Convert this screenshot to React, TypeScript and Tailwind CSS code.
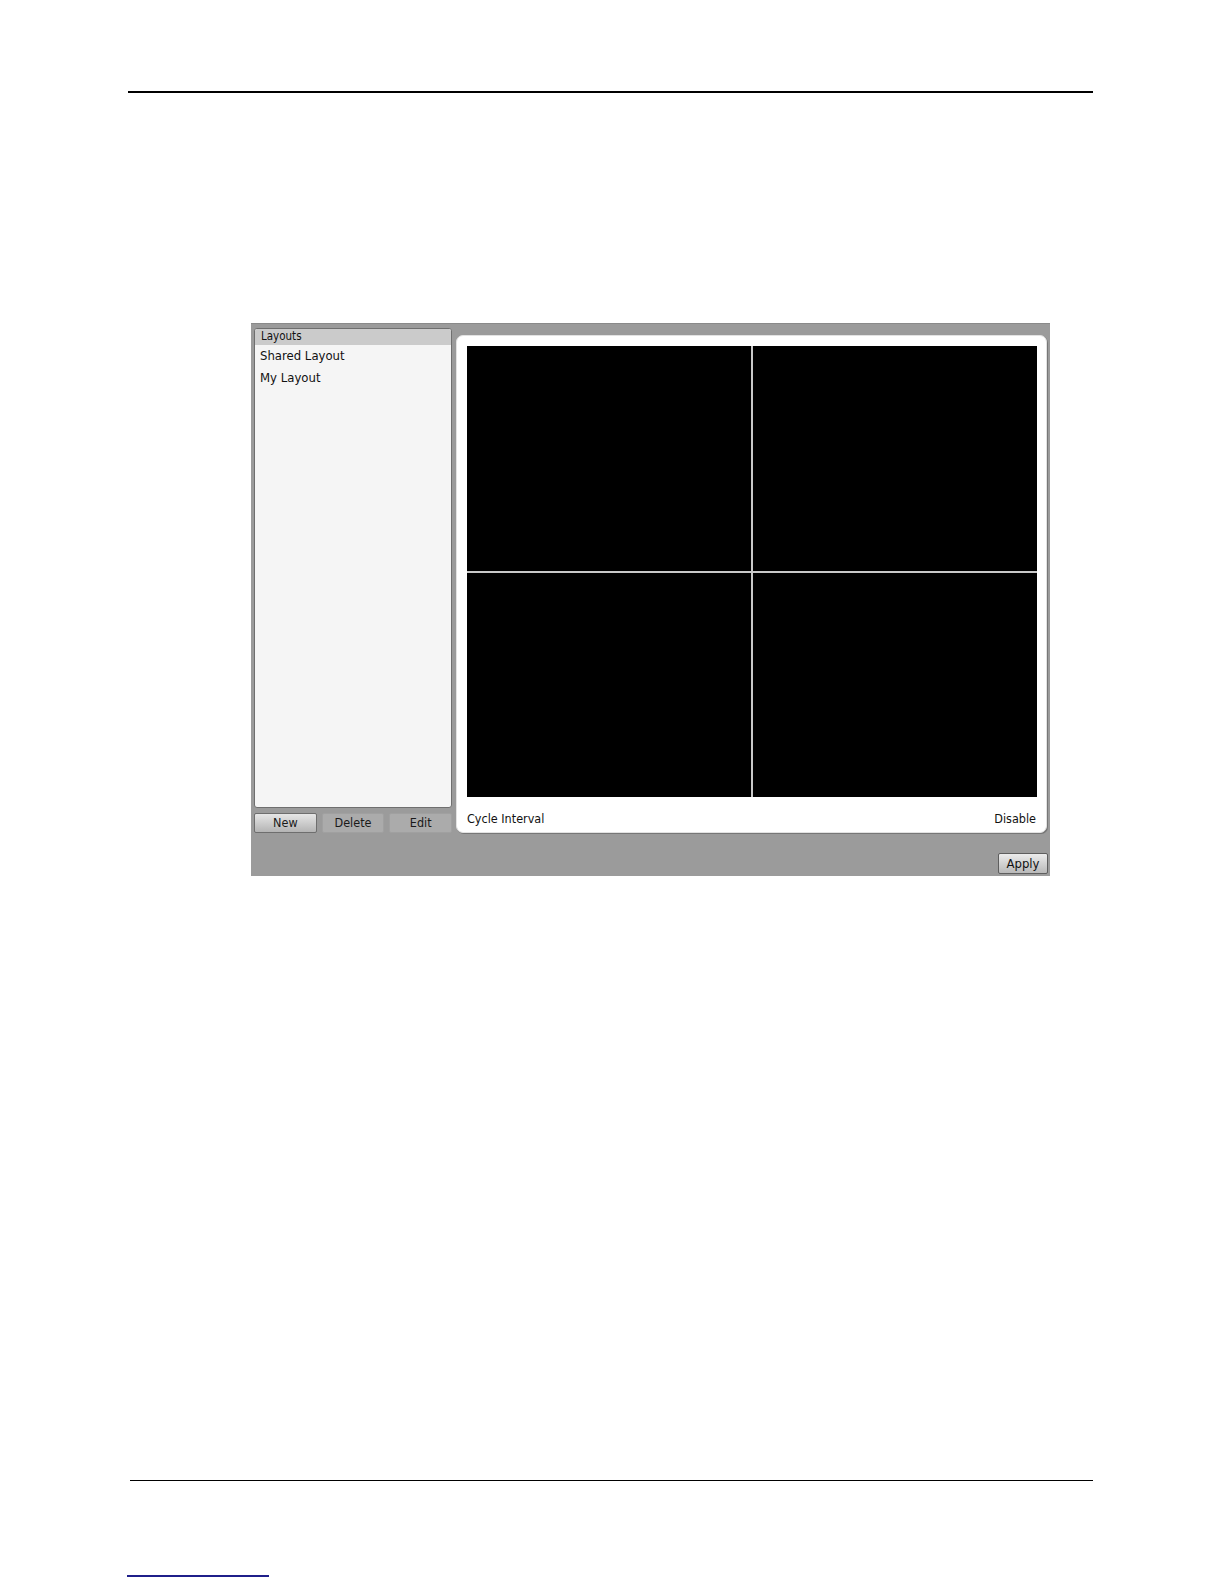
import React from "react"

const font = { fontFamily: '"DejaVu Sans Condensed", "DejaVu Sans", Verdana, sans-serif' }

function Cell() {
  return <div className="bg-black" />
}

function SmallButton({ label, active }: { label: string; active?: boolean }) {
  return (
    <div
      className={
        active
          ? "flex h-[20px] flex-1 items-center justify-center rounded-[2px] border border-[#6e6e6e] bg-gradient-to-b from-[#e6e6e6] to-[#b4b4b4] text-[12.5px] text-[#1a1a1a]"
          : "flex h-[20px] flex-1 items-center justify-center rounded-[2px] border border-[#a0a0a0] bg-[#ababab] text-[12.5px] text-[#1a1a1a]"
      }
    >
      {label}
    </div>
  )
}

export default function App() {
  return (
    <div className="w-[1224px] h-[1584px] bg-white overflow-hidden" style={font}>
      <div className="ml-[128px] mt-[91px] h-[2px] w-[965px] bg-black" />

      <div className="ml-[251px] mt-[230px] flex h-[553px] w-[799px] flex-col bg-[#9b9b9b] border-t border-[#8a8a8a]">
        <div className="flex pl-[3px] pt-[4px]">
          {/* left column */}
          <div className="flex w-[198px] flex-col">
            <div className="flex h-[480px] flex-col overflow-hidden rounded-[3px] border border-[#6f6f6f] bg-[#f5f5f5]">
              <div className="flex h-[16px] items-center bg-[#cbcbcb] px-[6px] text-[11.5px] text-[#111]">
                Layouts
              </div>
              <div className="flex h-[22px] items-center px-[5px] text-[13px] text-[#111]">Shared Layout</div>
              <div className="flex h-[22px] items-center px-[5px] text-[13px] text-[#111]">My Layout</div>
            </div>
            <div className="mt-[5px] flex gap-[5px]">
              <SmallButton label="New" active />
              <SmallButton label="Delete" />
              <SmallButton label="Edit" />
            </div>
          </div>

          {/* right panel */}
          <div className="ml-[4px] mt-[7px] flex h-[498px] w-[591px] flex-col rounded-[7px] border border-[#e2e2e2] bg-white px-[10px] pt-[10px] shadow-[1px_1px_0_#777]">
            <div className="grid h-[451px] w-[570px] grid-cols-2 grid-rows-2 gap-[2px] bg-[#c9c9c9]">
              <Cell />
              <Cell />
              <Cell />
              <Cell />
            </div>
            <div className="mt-[13px] flex items-center justify-between text-[12.5px] text-[#111]">
              <span>Cycle Interval</span>
              <span>Disable</span>
            </div>
          </div>
        </div>

        <div className="mt-[20px] flex justify-end pr-[2px]">
          <div className="flex h-[21px] w-[50px] items-center justify-center rounded-[2px] border border-[#5e5e5e] bg-gradient-to-b from-[#ececec] to-[#b9b9b9] text-[13px] text-[#111]">
            Apply
          </div>
        </div>
      </div>

      <div className="ml-[130px] mt-[604px] h-[1px] w-[963px] bg-black" />
      <div className="ml-[127px] mt-[94px] h-[2px] w-[142px] bg-[#1f1f8a]" />
    </div>
  )
}
